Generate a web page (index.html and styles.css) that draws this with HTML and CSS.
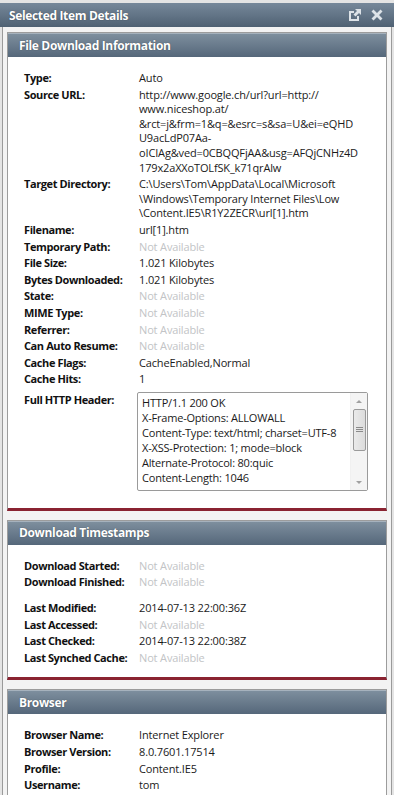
FILE: index.html
```html
<!DOCTYPE html>
<html>
<head>
<meta charset="utf-8">
<link rel="stylesheet" href="styles.css">
</head>
<body>
<div class="window">
  <div class="titlebar">
    <span class="title">Selected Item Details</span>
    <span class="tools">
      <svg class="ico" width="14" height="14" viewBox="0 0 14 14">
        <path d="M1 3h5v2H3v6h6V8h2v5H1z" fill="#dde3e8"/>
        <path d="M7 1h6v6l-2-2-3.5 3.5-2-2L9 3z" fill="#dde3e8"/>
      </svg>
      <svg class="ico" width="14" height="14" viewBox="0 0 14 14">
        <path d="M1.5 3.5l2-2L7 5l3.5-3.5 2 2L9 7l3.5 3.5-2 2L7 9l-3.5 3.5-2-2L5 7z" fill="#dde3e8"/>
      </svg>
    </span>
  </div>
  <div class="content">
    <section class="panel">
      <div class="panel-head">File Download Information</div>
      <div class="panel-body body-first">
        <div class="row"><span class="lbl">Type:</span><span class="val">Auto</span></div>
        <div class="row"><span class="lbl">Source URL:</span><span class="val">http://www.google.ch/url?url=http://<br>www.niceshop.at/<br>&amp;rct=j&amp;frm=1&amp;q=&amp;esrc=s&amp;sa=U&amp;ei=eQHD<br>U9acLdP07Aa-<br>oICIAg&amp;ved=0CBQQFjAA&amp;usg=AFQjCNHz4D<br>179x2aXXoTOLfSK_k71qrAlw</span></div>
        <div class="row"><span class="lbl">Target Directory:</span><span class="val">C:\Users\Tom\AppData\Local\Microsoft<br>\Windows\Temporary Internet Files\Low<br>\Content.IE5\R1Y2ZECR\url[1].htm</span></div>
        <div class="row"><span class="lbl">Filename:</span><span class="val">url[1].htm</span></div>
        <div class="row"><span class="lbl">Temporary Path:</span><span class="val na">Not Available</span></div>
        <div class="row"><span class="lbl">File Size:</span><span class="val">1.021 Kilobytes</span></div>
        <div class="row"><span class="lbl">Bytes Downloaded:</span><span class="val">1.021 Kilobytes</span></div>
        <div class="row"><span class="lbl">State:</span><span class="val na">Not Available</span></div>
        <div class="row"><span class="lbl">MIME Type:</span><span class="val na">Not Available</span></div>
        <div class="row"><span class="lbl">Referrer:</span><span class="val na">Not Available</span></div>
        <div class="row"><span class="lbl">Can Auto Resume:</span><span class="val na">Not Available</span></div>
        <div class="row"><span class="lbl">Cache Flags:</span><span class="val">CacheEnabled,Normal</span></div>
        <div class="row"><span class="lbl">Cache Hits:</span><span class="val">1</span></div>
        <div class="row row-box"><span class="lbl">Full HTTP Header:</span>
          <div class="textbox">
            <div class="tb-text">HTTP/1.1 200 OK<br>X-Frame-Options: ALLOWALL<br>Content-Type: text/html; charset=UTF-8<br>X-XSS-Protection: 1; mode=block<br>Alternate-Protocol: 80:quic<br>Content-Length: 1046</div>
            <div class="sbar">
              <span class="arr up"></span>
              <span class="thumb"><span class="grip"></span></span>
              <span class="arr down"></span>
            </div>
          </div>
        </div>
      </div>
    </section>

    <section class="panel">
      <div class="panel-head">Download Timestamps</div>
      <div class="panel-body body-second">
        <div class="row"><span class="lbl">Download Started:</span><span class="val na">Not Available</span></div>
        <div class="row"><span class="lbl">Download Finished:</span><span class="val na">Not Available</span></div>
        <div class="spacer"></div>
        <div class="row"><span class="lbl">Last Modified:</span><span class="val">2014-07-13 22:00:36Z</span></div>
        <div class="row"><span class="lbl">Last Accessed:</span><span class="val na">Not Available</span></div>
        <div class="row"><span class="lbl">Last Checked:</span><span class="val">2014-07-13 22:00:38Z</span></div>
        <div class="row"><span class="lbl">Last Synched Cache:</span><span class="val na">Not Available</span></div>
      </div>
    </section>

    <section class="panel">
      <div class="panel-head">Browser</div>
      <div class="panel-body">
        <div class="row"><span class="lbl">Browser Name:</span><span class="val">Internet Explorer</span></div>
        <div class="row"><span class="lbl">Browser Version:</span><span class="val">8.0.7601.17514</span></div>
        <div class="row"><span class="lbl">Profile:</span><span class="val">Content.IE5</span></div>
        <div class="row"><span class="lbl">Username:</span><span class="val">tom</span></div>
      </div>
    </section>
  </div>
</div>
</body>
</html>
```

FILE: styles.css
```css
html, body {
  margin: 0;
  padding: 0;
  background: #e4e4e4;
}
body {
  font-family: "Open Sans", "Noto Sans", sans-serif;
  font-size: 11px;
  color: #111;
  padding-top: 3px;
  height: 792px;
  overflow: hidden;
}
.window {
  display: flex;
  flex-direction: column;
}
.titlebar {
  height: 24px;
  display: flex;
  align-items: center;
  justify-content: space-between;
  padding: 0 10px 0 9px;
  background: linear-gradient(#76889a, #4f6173);
}
.title {
  color: #fff;
  font-weight: bold;
  font-size: 12px;
  letter-spacing: -0.35px;
  text-shadow: 0 0 1px rgba(0,0,0,0.5);
}
.tools {
  display: flex;
  gap: 8px;
  align-items: center;
}
.ico { display: block; }
.content {
  margin: 0 2px;
  border-left: 1px solid #9a9a9a;
  border-right: 1px solid #9a9a9a;
  background: #f3f3f3;
  padding: 5px 4px 0 4px;
  display: flex;
  flex-direction: column;
  gap: 9px;
  height: 800px;
}
.panel {
  background: #fff;
  border: 1px solid #9c9c9c;
  border-bottom: 3px solid #8a2331;
}
.panel-head {
  height: 24px;
  display: flex;
  align-items: center;
  padding-left: 11px;
  color: #fff;
  font-weight: bold;
  font-size: 12px;
  letter-spacing: -0.35px;
  background: linear-gradient(#7f909f, #55677a);
  box-shadow: inset 0 1px 0 #a6b2bd;
  text-shadow: 0 0 1px rgba(0,0,0,0.5);
}
.panel-body {
  padding: 13px 16px 13px 16px;
}
.body-first {
  padding-bottom: 16px;
}
.body-second {
  padding-bottom: 11px;
}
.row {
  display: grid;
  grid-template-columns: 115px 1fr;
  line-height: 14.6px;
  padding: 1px 0;
}
.lbl {
  font-weight: bold;
  color: #111;
  letter-spacing: -0.4px;
}
.val {
  color: #1a1a1a;
  white-space: nowrap;
  letter-spacing: -0.15px;
}
.na {
  color: #c2c4c6;
}
.spacer {
  height: 9px;
}
.row-box {
  margin-top: 4px;
  padding-top: 0;
}
.row-box .lbl {
  padding-top: 1px;
}
.textbox {
  margin-left: -2px;
  width: 229px;
  height: 97px;
  border: 1px solid #9a9a9a;
  border-radius: 2px;
  display: flex;
  background: #fff;
}
.tb-text {
  flex: 1;
  padding: 2px 0 0 4px;
  line-height: 15px;
  color: #1a1a1a;
  white-space: nowrap;
  overflow: hidden;
  letter-spacing: -0.2px;
}
.sbar {
  width: 16px;
  background: #f4f4f4;
  display: flex;
  flex-direction: column;
  align-items: center;
  border-left: 1px solid #f0f0f0;
}
.arr {
  width: 0;
  height: 0;
  border-left: 3px solid transparent;
  border-right: 3px solid transparent;
}
.arr.up {
  border-bottom: 3px solid #a0a0a0;
  margin-top: 7px;
}
.arr.down {
  border-top: 3px solid #a0a0a0;
  margin-top: auto;
  margin-bottom: 6px;
}
.thumb {
  margin-top: 6px;
  width: 13px;
  height: 42px;
  border: 1px solid #9a9a9a;
  border-radius: 2px;
  background: linear-gradient(90deg, #eaeaea, #dcdcdc);
  display: flex;
  align-items: center;
  justify-content: center;
  box-sizing: border-box;
}
.grip {
  width: 7px;
  height: 5px;
  background: repeating-linear-gradient(#8a8a8a 0 1px, transparent 1px 2px);
}
```
